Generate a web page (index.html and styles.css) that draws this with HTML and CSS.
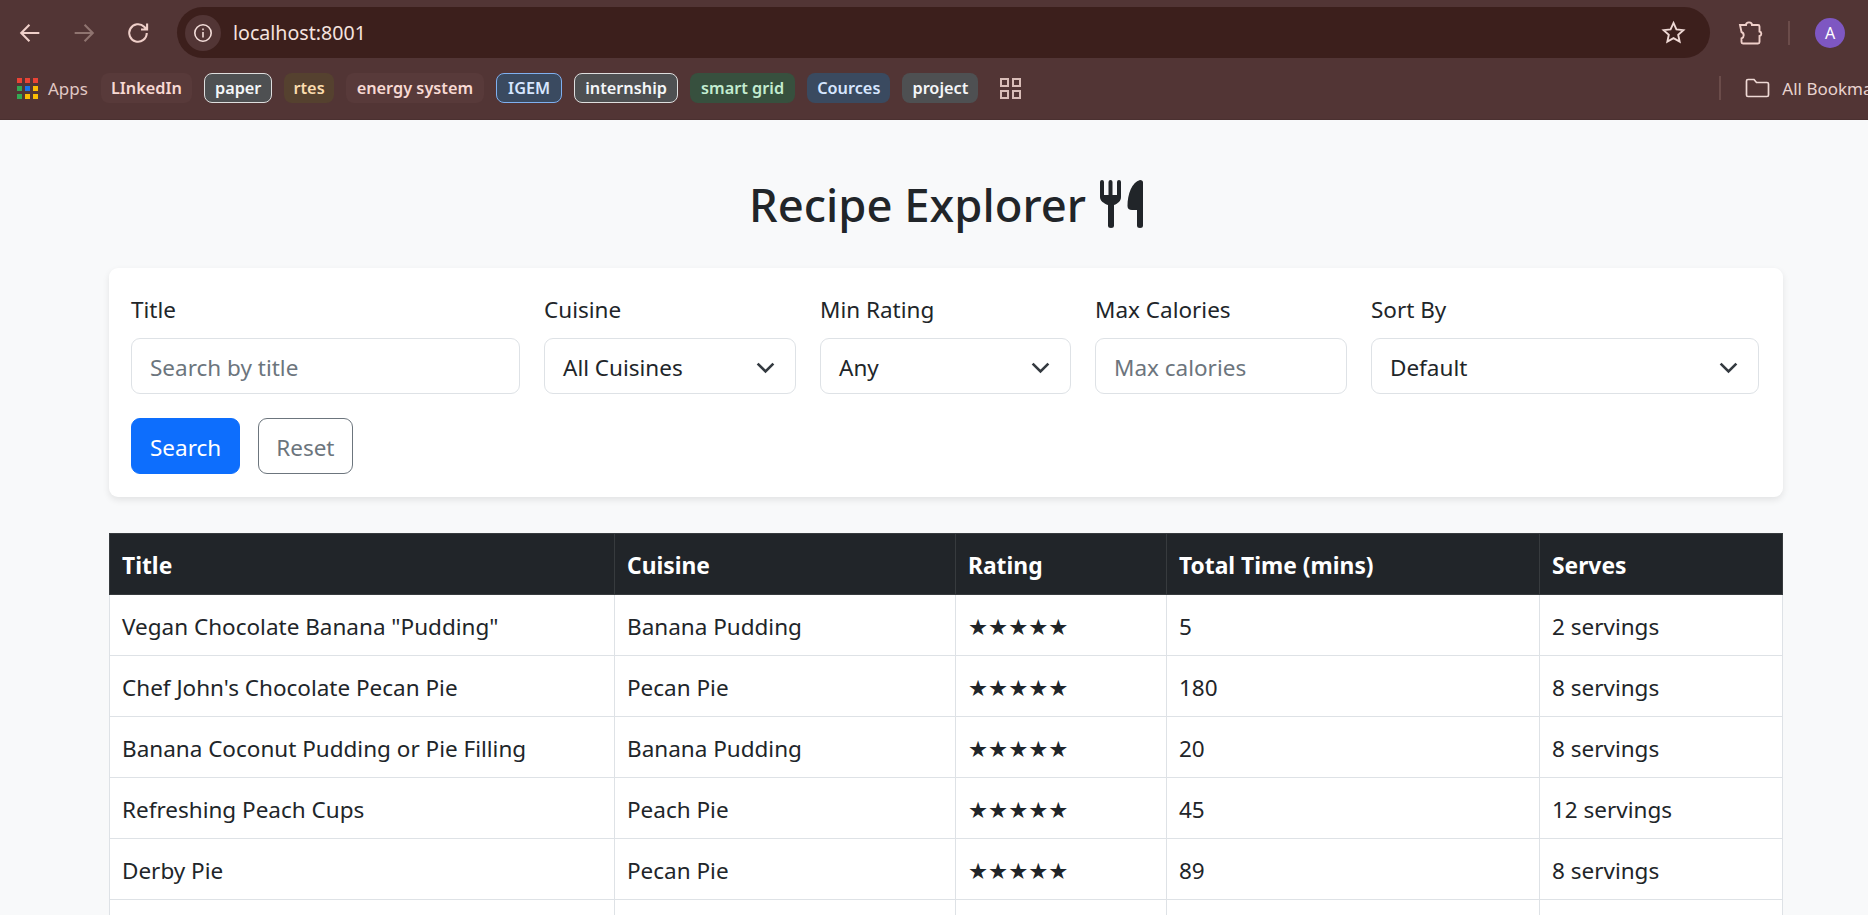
FILE: index.html
```html
<!DOCTYPE html>
<html lang="en">
<head>
    <meta charset="UTF-8">
    <title>Recipe Explorer</title>
    <link rel="stylesheet" href="styles.css">
</head>
<body>
<div class="browser">
    <div class="toolbar">
        <svg class="navIcon" viewBox="0 0 24 24"><path d="M20 12H5M11.5 5L4.5 12l7 7"/></svg>
        <svg class="navIcon dim" viewBox="0 0 24 24"><path d="M4 12h15M12.5 5l7 7-7 7"/></svg>
        <svg class="navIcon" viewBox="0 0 24 24"><path d="M19.5 12a7.5 7.5 0 1 1-2.2-5.3L19.5 9M19.8 3.8V9h-5.2"/></svg>
        <div class="omnibox">
            <div class="siteInfo">
                <svg class="infoIcon" viewBox="0 0 20 20"><circle cx="10" cy="10" r="8.2"/><path d="M10 9v5.5M10 5.4v1.8"/></svg>
            </div>
            <div class="url">localhost:8001</div>
            <svg class="starIcon" viewBox="0 0 24 24"><path d="M12 2.8l2.8 6.2 6.7.7-5 4.5 1.4 6.6-5.9-3.4-5.9 3.4 1.4-6.6-5-4.5 6.7-.7z"/></svg>
        </div>
        <svg class="puzzleIcon" viewBox="0 0 26 26"><path d="M3 5h6a3 2.6 0 0 1 6 0h6a1.5 1.5 0 0 1 1.500 1.500v5a2.300 2.300 0 0 1 0 4.500v6a1.500 1.500 0 0 1-1.500 1.500H6a1.500 1.500 0 0 1-1.500-1.500v-3.500a3.500 3.500 0 0 0 0-6.500z"/></svg>
        <div class="sep"></div>
        <div class="avatar">A</div>
    </div>
    <div class="bookmarks">
        <svg class="appsIcon" viewBox="0 0 21 21">
            <rect x="0" y="0" width="5" height="5" fill="#ea4335"/><rect x="8" y="0" width="5" height="5" fill="#ea4335"/><rect x="16" y="0" width="5" height="5" fill="#ea4335"/>
            <rect x="0" y="8" width="5" height="5" fill="#34a853"/><rect x="8" y="8" width="5" height="5" fill="#1a73e8"/><rect x="16" y="8" width="5" height="5" fill="#fbbc04"/>
            <rect x="0" y="16" width="5" height="5" fill="#34a853"/><rect x="8" y="16" width="5" height="5" fill="#fbbc04"/><rect x="16" y="16" width="5" height="5" fill="#fbbc04"/>
        </svg>
        <span class="appsText">Apps</span>
        <span class="chip chipPlain">LInkedIn</span>
        <span class="chip chipGrey chipRing">paper</span>
        <span class="chip chipOrange chipTight">rtes</span>
        <span class="chip chipPlain chipWide">energy system</span>
        <span class="chip chipBlue chipRingBlue chipWide">IGEM</span>
        <span class="chip chipGrey chipRing">internship</span>
        <span class="chip chipGreen chipWide">smart grid</span>
        <span class="chip chipBlue">Cources</span>
        <span class="chip chipGrey">project</span>
        <svg class="tabsIcon" viewBox="0 0 21 21"><path d="M1 1h7v7H1zM13 1h7v7h-7zM1 13h7v7H1zM13 13h7v7h-7z"/></svg>
        <div class="spacer"></div>
        <div class="sep sepLow"></div>
        <svg class="folderIcon" viewBox="0 0 24 20"><path d="M1 3a1.500 1.500 0 0 1 1.500-1.500h6L11 4.500h10.500A1.500 1.500 0 0 1 23 6v11a1.500 1.500 0 0 1-1.500 1.500h-19A1.500 1.500 0 0 1 1 17z"/></svg>
        <span class="allMarks">All Bookmarks</span>
    </div>
</div>
<div class="page">
    <div class="container">
        <div class="heading">
            <h2>Recipe Explorer</h2>
            <svg class="cutlery" viewBox="0 0 43 48">
                <path d="M0 2a2 2 0 0 1 4 0v13h4.500V2a2 2 0 0 1 4 0v13H17V2a2 2 0 0 1 4 0v15c0 4-3 6.500-7 8v20.500a3 2.500 0 0 1-6 0V25c-4-1.500-8-4-8-8z"/>
                <path d="M40 0c2 0 3 1 3 2.500V45.500a3 2.500 0 0 1-6 0V30h-5c-3 0-4.500-1.500-4.500-4C27.500 14 32 2 40 0z"/>
            </svg>
        </div>
        <div class="card">
            <div class="filters">
                <div class="field">
                    <label>Title</label>
                    <input class="control" type="text" placeholder="Search by title">
                </div>
                <div class="field">
                    <label>Cuisine</label>
                    <div class="control selectBox">All Cuisines<svg class="chevron" viewBox="0 0 16 16"><path d="M2 5l6 6 6-6"/></svg></div>
                </div>
                <div class="field">
                    <label>Min Rating</label>
                    <div class="control selectBox">Any<svg class="chevron" viewBox="0 0 16 16"><path d="M2 5l6 6 6-6"/></svg></div>
                </div>
                <div class="field">
                    <label>Max Calories</label>
                    <input class="control" type="text" placeholder="Max calories">
                </div>
                <div class="field">
                    <label>Sort By</label>
                    <div class="control selectBox">Default<svg class="chevron" viewBox="0 0 16 16"><path d="M2 5l6 6 6-6"/></svg></div>
                </div>
            </div>
            <div class="actions">
                <button class="btn btnSearch">Search</button>
                <button class="btn btnReset">Reset</button>
            </div>
        </div>
        <table class="recipes">
            <thead>
            <tr>
                <th class="colTitle">Title</th>
                <th class="colCuisine">Cuisine</th>
                <th class="colRating">Rating</th>
                <th class="colTime">Total Time (mins)</th>
                <th>Serves</th>
            </tr>
            </thead>
            <tbody>
            <tr><td>Vegan Chocolate Banana "Pudding"</td><td>Banana Pudding</td><td class="stars">★★★★★</td><td>5</td><td>2 servings</td></tr>
            <tr><td>Chef John's Chocolate Pecan Pie</td><td>Pecan Pie</td><td class="stars">★★★★★</td><td>180</td><td>8 servings</td></tr>
            <tr><td>Banana Coconut Pudding or Pie Filling</td><td>Banana Pudding</td><td class="stars">★★★★★</td><td>20</td><td>8 servings</td></tr>
            <tr><td>Refreshing Peach Cups</td><td>Peach Pie</td><td class="stars">★★★★★</td><td>45</td><td>12 servings</td></tr>
            <tr><td>Derby Pie</td><td>Pecan Pie</td><td class="stars">★★★★★</td><td>89</td><td>8 servings</td></tr>
            <tr><td>&nbsp;</td><td></td><td></td><td></td><td></td></tr>
            </tbody>
        </table>
    </div>
</div>
</body>
</html>
```

FILE: styles.css
```css
html, body {
    margin: 0;
    height: 100%;
    overflow: hidden;
}

body {
    background-color: #f8f9fa;
    color: #212529;
    font-family: "Noto Sans", "Liberation Sans", sans-serif;
    font-size: 22.5px;
}

.browser {
    background-color: #523535;
    height: 120px;
    border-bottom: 1px solid #4a3030;
    box-sizing: border-box;
}

.toolbar {
    display: flex;
    align-items: center;
    height: 65px;
    padding-left: 16px;
}

.navIcon {
    width: 28px;
    height: 28px;
    margin-right: 26px;
    fill: none;
    stroke: #efcfc9;
    stroke-width: 1.8;
}

.dim {
    stroke: #8f7470;
}

.omnibox {
    display: flex;
    align-items: center;
    width: 1533px;
    height: 51px;
    margin-left: -1px;
    margin-right: 27px;
    background-color: #3c1f1c;
    border-radius: 26px;
    box-sizing: border-box;
    padding-left: 8px;
    padding-right: 24px;
}

.siteInfo {
    display: flex;
    align-items: center;
    justify-content: center;
    width: 36px;
    height: 36px;
    border-radius: 50%;
    background-color: #523535;
}

.infoIcon {
    width: 20px;
    height: 20px;
    fill: none;
    stroke: #f2dcd8;
    stroke-width: 1.6;
}

.url {
    flex: 1;
    margin-left: 12px;
    color: #f5e3df;
    font-size: 19.6px;
}

.starIcon {
    width: 25px;
    height: 25px;
    fill: none;
    stroke: #efd9d5;
    stroke-width: 1.8;
}

.puzzleIcon {
    width: 26px;
    height: 26px;
    fill: none;
    stroke: #efcfc9;
    stroke-width: 1.9;
}

.sep {
    width: 2px;
    height: 24px;
    margin-left: 25px;
    background-color: #6b4c4a;
}

.avatar {
    width: 30px;
    height: 30px;
    margin-left: 25px;
    border-radius: 50%;
    background-color: #7e57c2;
    color: white;
    font-size: 16px;
    line-height: 30px;
    text-align: center;
}

.bookmarks {
    display: flex;
    align-items: center;
    height: 46px;
    padding-left: 17px;
    white-space: nowrap;
}

.appsIcon {
    width: 21px;
    height: 21px;
    flex-shrink: 0;
}

.appsText {
    margin-left: 10px;
    margin-right: 13px;
    color: #e0c8c4;
    font-size: 17px;
}

.chip {
    box-sizing: border-box;
    display: flex;
    align-items: center;
    justify-content: center;
    height: 30px;
    padding: 0 10px;
    margin-right: 12px;
    border-radius: 8px;
    font-size: 16.3px;
    font-weight: 600;
    flex-shrink: 0;
}

.chipTight {
    padding: 0 9px;
}

.chipWide {
    padding: 0 11px;
}

.chipPlain {
    background-color: #583a3a;
    color: #f7d9d3;
}

.chipGrey {
    background-color: #4e5052;
    color: #f4f6f8;
}

.chipOrange {
    background-color: #55412f;
    color: #fbdcae;
}

.chipBlue {
    background-color: #3a4a60;
    color: #d6e6ff;
}

.chipGreen {
    background-color: #37503e;
    color: #c3ecd0;
}

.chipRing {
    border: 1px solid #dedede;
}

.chipRingBlue {
    border: 1px solid #7fb0f0;
}

.tabsIcon {
    width: 21px;
    height: 21px;
    margin-left: 10px;
    fill: none;
    stroke: #d9bdb8;
    stroke-width: 2;
    flex-shrink: 0;
}

.spacer {
    width: 698px;
    flex-shrink: 0;
}

.sepLow {
    margin-left: 0;
    flex-shrink: 0;
}

.folderIcon {
    width: 25px;
    height: 20px;
    margin-left: 24px;
    fill: none;
    stroke: #efd9d5;
    stroke-width: 1.7;
    flex-shrink: 0;
}

.allMarks {
    margin-left: 12px;
    color: #e8d2ce;
    font-size: 17px;
}

.container {
    width: 1674px;
    margin-left: 109px;
}

.heading {
    display: flex;
    justify-content: center;
    align-items: center;
    gap: 14px;
    margin-top: 55px;
    margin-bottom: 35px;
}

.heading h2 {
    margin: 0;
    font-size: 45.4px;
    font-weight: 500;
    line-height: 58px;
}

.cutlery {
    width: 43px;
    height: 48px;
    fill: #212529;
}

.card {
    background-color: white;
    border-radius: 9px;
    box-shadow: 0 3px 7px rgba(0, 0, 0, 0.09);
    padding: 24px 24px 23px 22px;
    margin-bottom: 36px;
}

.filters {
    display: grid;
    grid-template-columns: 389fr 252fr 251fr 252fr 388fr;
    gap: 24px;
}

.field label {
    display: block;
    height: 36px;
    line-height: 36px;
    margin-bottom: 10px;
}

.control {
    box-sizing: border-box;
    display: block;
    width: 100%;
    height: 56px;
    padding: 2px 18px 0;
    border: 1.5px solid #dee2e6;
    border-radius: 9px;
    background-color: white;
    color: #212529;
    font-family: inherit;
    font-size: 22.5px;
}

.control::placeholder {
    color: #6c757d;
}

.selectBox {
    display: flex;
    align-items: center;
    justify-content: space-between;
}

.chevron {
    width: 21px;
    height: 21px;
    margin-right: 1px;
    fill: none;
    stroke: #343a40;
    stroke-width: 2;
}

.actions {
    display: flex;
    gap: 18px;
    margin-top: 24px;
}

.btn {
    box-sizing: border-box;
    height: 56px;
    padding: 2px 18px 0;
    border-radius: 9px;
    font-family: inherit;
    font-size: 22.5px;
    background-color: white;
}

.btnSearch {
    background-color: #0d6efd;
    border: 1.5px solid #0d6efd;
    color: white;
}

.btnReset {
    padding: 2px 17px 0;
    border: 1.5px solid #6c757d;
    color: #6c757d;
}

.recipes {
    width: 100%;
    table-layout: fixed;
    border-collapse: collapse;
    background-color: white;
}

.recipes th, .recipes td {
    height: 61px;
    padding: 3px 12px 0;
    box-sizing: border-box;
    border: 1.5px solid #dee2e6;
    text-align: left;
}

.recipes th {
    background-color: #212529;
    border-color: #373b3e;
    color: white;
    font-size: 22.8px;
    font-weight: 700;
}

.colTitle {
    width: 505px;
}

.colCuisine {
    width: 341px;
}

.colRating {
    width: 211px;
}

.colTime {
    width: 373px;
}

.stars {
    font-family: "DejaVu Sans", sans-serif;
    font-size: 22.4px;
}
```
